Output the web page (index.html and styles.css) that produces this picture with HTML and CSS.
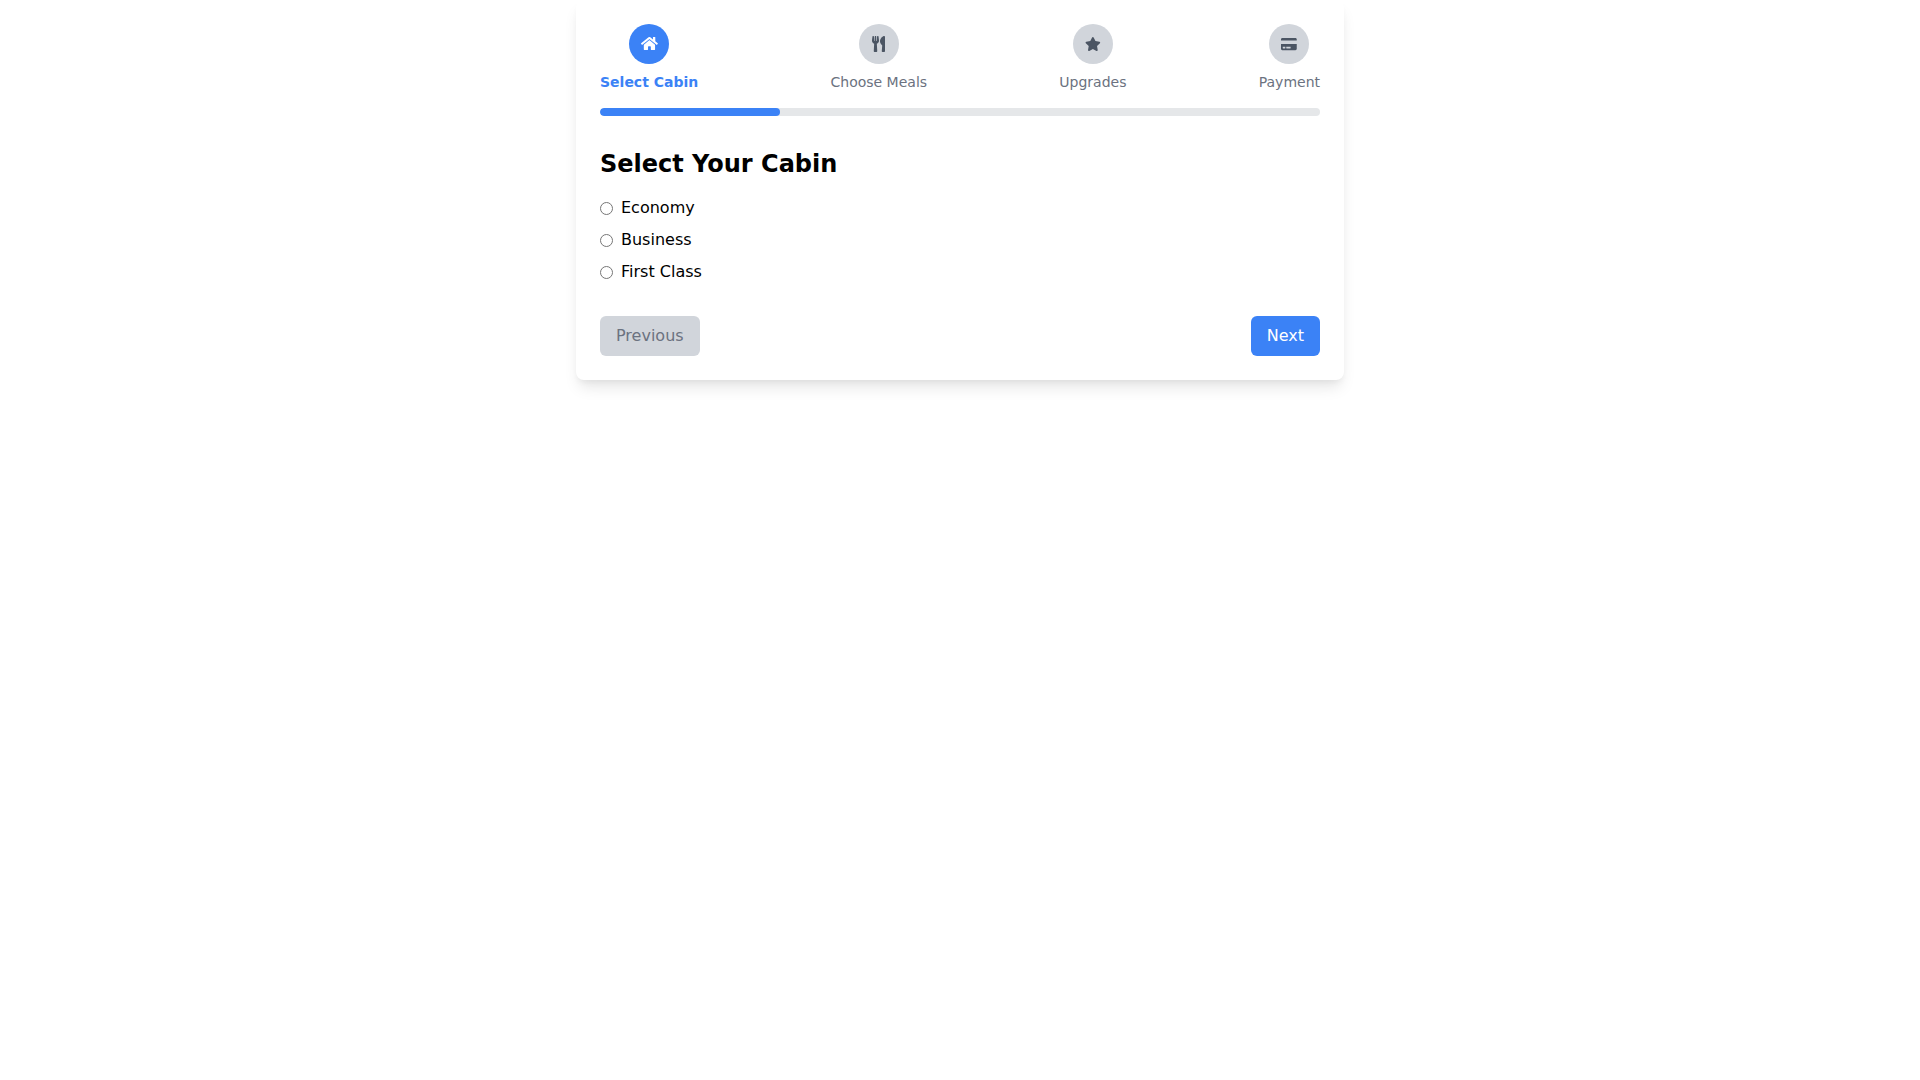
FILE: index.html
```html
<!DOCTYPE html>
<html lang="en">
<head>
<meta charset="utf-8">
<title>Select Your Cabin</title>
<link rel="stylesheet" href="styles.css">
</head>
<body>
<main class="card">
  <div class="steps">
    <div class="step active">
      <span class="dot"><svg class="icon icon-home" viewBox="0 0 576 512"><path d="M280.37 148.26L96 300.11V464a16 16 0 0 0 16 16l112.06-.29a16 16 0 0 0 15.92-16V368a16 16 0 0 1 16-16h64a16 16 0 0 1 16 16v95.64a16 16 0 0 0 16 16.05L464 480a16 16 0 0 0 16-16V300L295.67 148.26a12.19 12.19 0 0 0-15.3 0zM571.6 251.47L488 182.56V44.05a12 12 0 0 0-12-12h-56a12 12 0 0 0-12 12v72.61L318.47 43a48 48 0 0 0-61 0L4.34 251.47a12 12 0 0 0-1.6 16.9l25.5 31A12 12 0 0 0 45.15 301l235.22-193.74a12.19 12.19 0 0 1 15.3 0L530.9 301a12 12 0 0 0 16.9-1.6l25.5-31a12 12 0 0 0-1.7-16.93z"/></svg></span>
      <span class="label">Select Cabin</span>
    </div>
    <div class="step">
      <span class="dot"><svg class="icon icon-tall" viewBox="0 0 416 512"><path d="M207.9 15.2c.8 4.7 16.1 94.5 16.1 128.8 0 52.3-27.8 89.6-68.9 104.6L168 486.7c.7 13.7-10.2 25.3-24 25.3H80c-13.7 0-24.7-11.5-24-25.3l12.9-238.1C27.7 233.6 0 196.2 0 144 0 109.6 15.3 19.9 16.1 15.2 19.3-5.1 61.4-5.4 64 16.3v141.2c1.3 3.4 15.1 3.2 16 0 1.4-25.3 7.9-139.2 8-141.8 3.3-20.8 44.7-20.8 47.9 0 .2 2.7 6.6 116.5 8 141.8.9 3.2 14.8 3.4 16 0V16.3c2.6-21.6 44.8-21.4 48-1.1zm119.2 285.7l-15 185.1c-1.2 14 9.9 26 23.9 26h56c13.3 0 24-10.7 24-24V24c0-13.2-10.7-24-24-24-82.5 0-221.4 178.5-64.9 300.9z"/></svg></span>
      <span class="label">Choose Meals</span>
    </div>
    <div class="step">
      <span class="dot"><svg class="icon" viewBox="0 0 576 512"><path d="M259.3 17.8L194 150.2 47.9 171.5c-26.2 3.8-36.7 36.1-17.7 54.6l105.7 103-25 145.5c-4.5 26.3 23.2 46 46.4 33.7L288 439.6l130.7 68.7c23.2 12.2 50.9-7.4 46.4-33.7l-25-145.5 105.7-103c19-18.5 8.5-50.8-17.7-54.6L382 150.2 316.7 17.8c-11.7-23.6-45.6-23.9-57.4 0z"/></svg></span>
      <span class="label">Upgrades</span>
    </div>
    <div class="step">
      <span class="dot"><svg class="icon" viewBox="0 0 576 512"><path d="M0 432c0 26.5 21.5 48 48 48h480c26.5 0 48-21.5 48-48V256H0v176zm192-68c0-6.6 5.4-12 12-12h136c6.6 0 12 5.4 12 12v40c0 6.6-5.4 12-12 12H204c-6.6 0-12-5.4-12-12v-40zm-128 0c0-6.6 5.4-12 12-12h72c6.6 0 12 5.4 12 12v40c0 6.6-5.4 12-12 12H76c-6.6 0-12-5.4-12-12v-40zM576 80v48H0V80c0-26.5 21.5-48 48-48h480c26.5 0 48 21.5 48 48z"/></svg></span>
      <span class="label">Payment</span>
    </div>
  </div>
  <div class="track"><div class="fill"></div></div>
  <h2 class="title">Select Your Cabin</h2>
  <div class="options">
    <label class="option"><input type="radio" name="cabin" class="radio"><span>Economy</span></label>
    <label class="option"><input type="radio" name="cabin" class="radio"><span>Business</span></label>
    <label class="option"><input type="radio" name="cabin" class="radio"><span>First Class</span></label>
  </div>
  <div class="actions">
    <button class="btn btn-prev" disabled>Previous</button>
    <button class="btn btn-next">Next</button>
  </div>
</main>
</body>
</html>
```
FILE: styles.css
```css
* { box-sizing: border-box; }
html, body { margin: 0; padding: 0; background: #fff; }
body { min-height: 100vh; font-family: "DejaVu Sans", sans-serif; font-size: 16px; line-height: 24px; color: #000; }
.card {
  width: 768px;
  margin: 0 auto;
  padding: 24px;
  background: #fff;
  border-radius: 8px;
  box-shadow: 0 10px 15px -3px rgba(0,0,0,.1), 0 4px 6px -2px rgba(0,0,0,.05);
}
.steps { display: flex; justify-content: space-between; margin-bottom: 16px; }
.step { display: flex; flex-direction: column; align-items: center; }
.dot {
  width: 40px; height: 40px; border-radius: 50%;
  background: #d1d5db; color: #4b5563;
  display: flex; align-items: center; justify-content: center;
}
.icon { height: 14px; display: block; fill: currentColor; }
.icon-home { height: 15px; margin-bottom: 1px; }
.icon-tall { height: 16px; }
.label { margin-top: 8px; font-size: 14px; line-height: 20px; color: #6b7280; }
.step.active .dot { background: #3b82f6; color: #fff; }
.step.active .label { color: #3b82f6; font-weight: 700; }
.track { height: 8px; border-radius: 4px; background: #e5e7e9; margin-bottom: 32px; overflow: hidden; }
.fill { height: 100%; width: 25%; border-radius: 4px; background: #3b82f6; }
.title { margin: 0 0 16px; font-size: 24px; line-height: 32px; font-weight: 700; }
.options { display: flex; flex-direction: column; gap: 8px; }
.option { display: flex; align-items: center; gap: 8px; }
.radio { margin: 0; width: 13px; height: 13px; }
.actions { display: flex; justify-content: space-between; margin-top: 32px; }
.btn { font: inherit; border: 0; border-radius: 6px; padding: 8px 16px; height: 40px; }
.btn-prev { background: #d1d5db; color: #6b7280; }
.btn-next { background: #3b82f6; color: #fff; }
```
